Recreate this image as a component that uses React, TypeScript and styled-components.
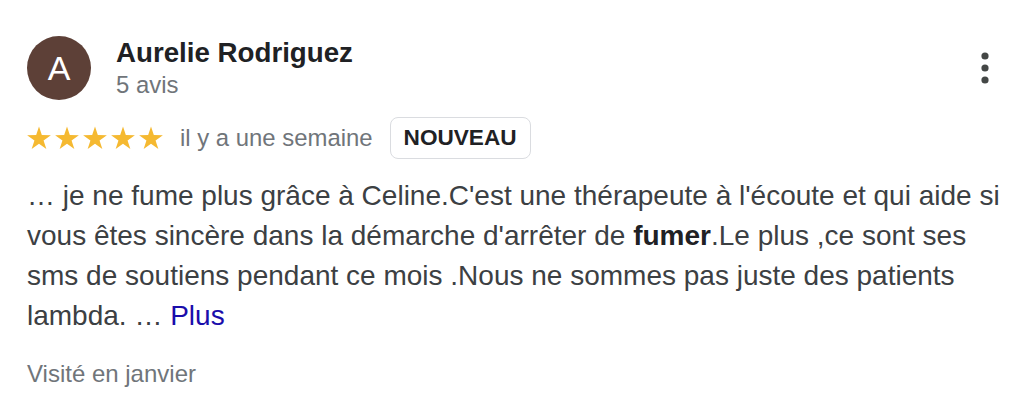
import React from 'react';
import styled, { createGlobalStyle } from 'styled-components';

const GlobalStyle = createGlobalStyle`
    html, body {
        margin: 0;
        padding: 0;
        background: #ffffff;
    }
    body {
        font-family: 'Liberation Sans', Arial, sans-serif;
    }
`;

const review = {
    author: 'Aurelie Rodriguez',
    initial: 'A',
    reviewCount: '5 avis',
    rating: 5,
    when: 'il y a une semaine',
    visited: 'Visité en janvier',
};

function Star() {
    return (
        <StarIcon viewBox="0 0 24 24" aria-hidden>
            <polygon points="12,0.5 14.82,9.12 23.89,9.14 16.56,14.48 19.35,23.11 12,17.8 4.65,23.11 7.44,14.48 0.11,9.14 9.18,9.12" />
        </StarIcon>
    );
}

function MoreButton() {
    return (
        <DotsButton aria-label="Plus d'options">
            <svg width="8" height="32" viewBox="0 0 8 32">
                <circle cx="4" cy="4" r="3.6" />
                <circle cx="4" cy="16" r="3.6" />
                <circle cx="4" cy="28" r="3.6" />
            </svg>
        </DotsButton>
    );
}

export default function App() {
    return (
        <>
            <GlobalStyle />
            <Card>
                <Header>
                    <Avatar>{review.initial}</Avatar>
                    <AuthorInfo>
                        <AuthorName>{review.author}</AuthorName>
                        <ReviewCount>{review.reviewCount}</ReviewCount>
                    </AuthorInfo>
                    <MoreButton />
                </Header>

                <RatingRow>
                    <Stars>
                        {Array.from({ length: review.rating }).map((_, i) => (
                            <Star key={i} />
                        ))}
                    </Stars>
                    <MetaText>{review.when}</MetaText>
                    <Badge>NOUVEAU</Badge>
                </RatingRow>

                <ReviewText>
                    … je ne fume plus grâce à Celine.C'est une thérapeute à
                    l'écoute et qui aide si vous êtes sincère dans la démarche
                    d'arrêter de <strong>fumer</strong>.Le plus ,ce sont ses sms
                    de soutiens pendant ce mois .Nous ne sommes pas juste des
                    patients lambda. …{' '}
                    <MoreLink href="#">Plus</MoreLink>
                </ReviewText>

                <Visited>{review.visited}</Visited>
            </Card>
        </>
    );
}

const Card = styled.div`
    width: 985px;
    padding: 36px 22px 20px 27px;
    color: #3c4043;
`;

const Header = styled.div`
    display: flex;
    align-items: flex-start;
`;

const Avatar = styled.div`
    flex: none;
    width: 64px;
    height: 64px;
    border-radius: 50%;
    background: #5d4037;
    color: #ffffff;
    font-size: 34px;
    display: flex;
    align-items: center;
    justify-content: center;
    margin-right: 25px;
`;

const AuthorInfo = styled.div`
    flex: 1;
    display: flex;
    flex-direction: column;
`;

const AuthorName = styled.div`
    font-size: 27.7px;
    line-height: 34px;
    font-weight: bold;
    color: #202124;
`;

const MetaText = styled.div`
    font-size: 23.9px;
    line-height: 32px;
    color: #70757a;
`;

const ReviewCount = styled(MetaText)`
    margin-top: -1.5px;
`;

const DotsButton = styled.button`
    flex: none;
    border: none;
    background: none;
    padding: 0;
    margin: 16px 23px 0 0;
    display: flex;
    fill: #444746;
`;

const RatingRow = styled.div`
    display: flex;
    align-items: center;
    margin-top: 16px;
    height: 42px;
`;

const Stars = styled.div`
    display: flex;
    gap: 4px;
    margin-right: 17px;
`;

const StarIcon = styled.svg`
    width: 24px;
    height: 24px;
    fill: #f5b931;
`;

const Badge = styled.span`
    margin-left: 17px;
    height: 42px;
    box-sizing: border-box;
    padding: 0 13px;
    display: inline-flex;
    align-items: center;
    border: 1.5px solid #dadce0;
    border-radius: 8px;
    font-size: 22.6px;
    font-weight: bold;
    color: #202124;
`;

const ReviewText = styled.p`
    margin: 17px 0 0;
    font-size: 28px;
    line-height: 40px;
    color: #3c4043;

    strong {
        font-weight: bold;
        color: #202124;
    }
`;

const MoreLink = styled.a`
    color: #1a0dab;
    text-decoration: none;
`;

const Visited = styled.div`
    margin-top: 22px;
    font-size: 24px;
    line-height: 32px;
    color: #70757a;
`;
